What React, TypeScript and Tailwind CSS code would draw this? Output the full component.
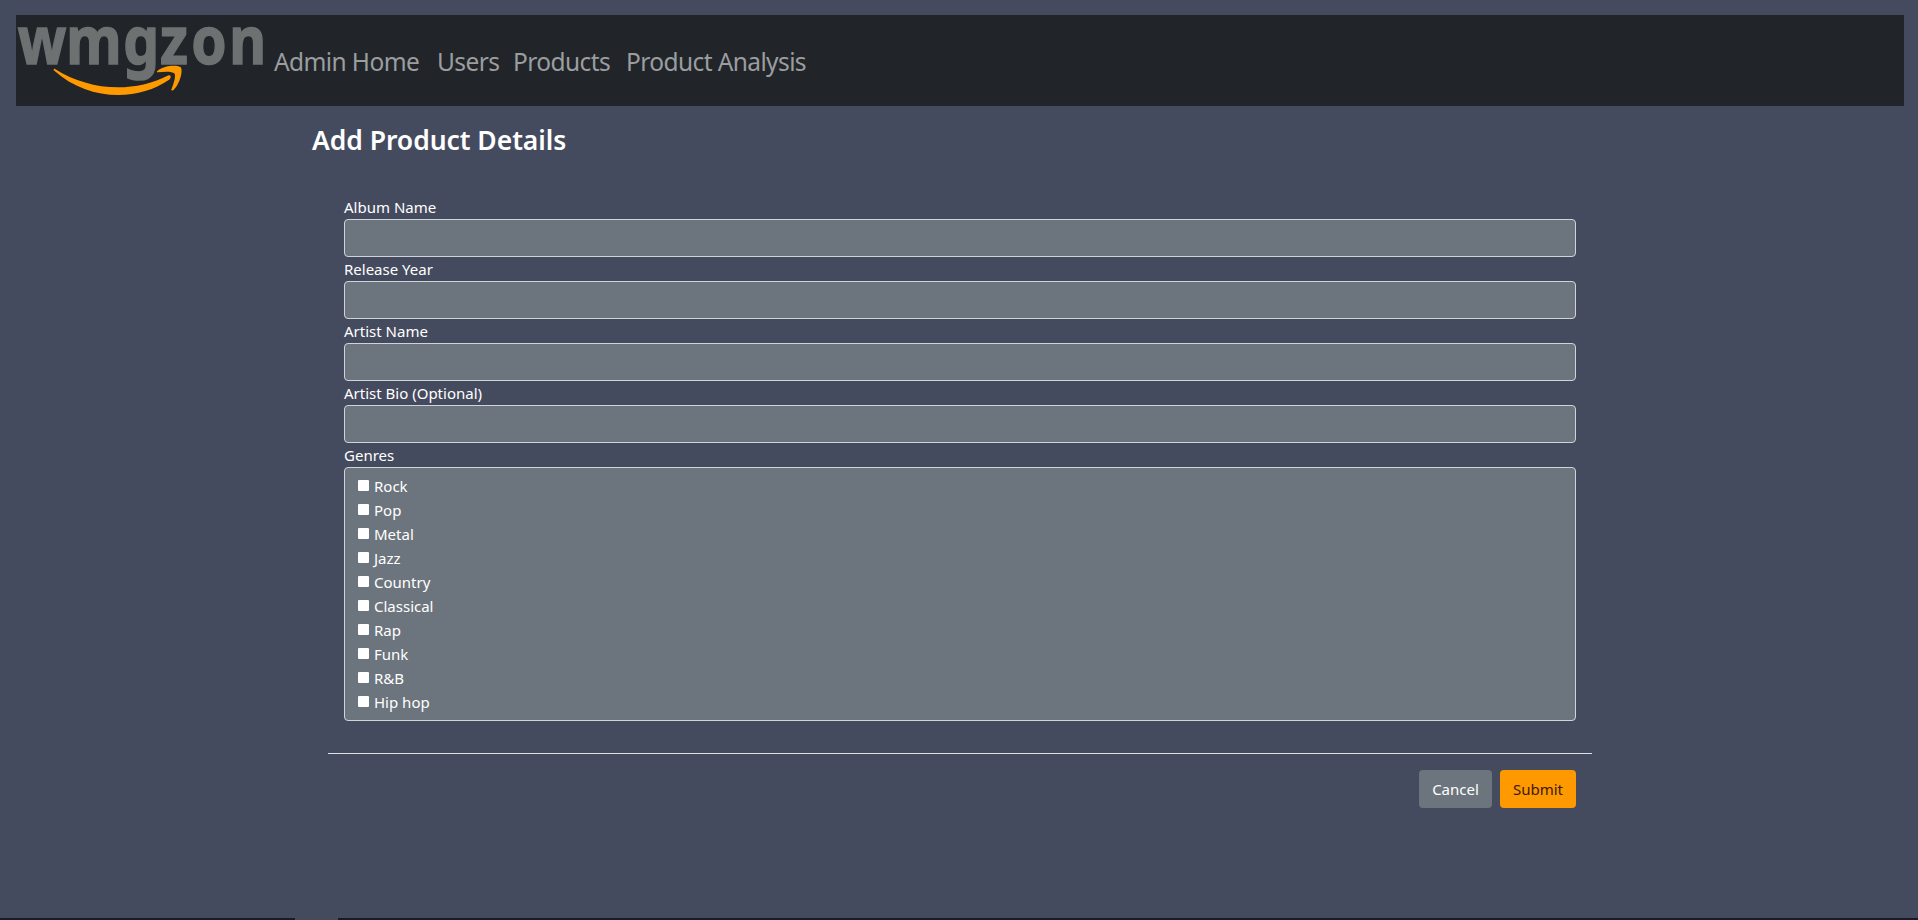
const links = [
  { label: "Admin Home", cls: "w-[147px]" },
  { label: "Users", cls: "w-[60px]" },
  { label: "Products", cls: "w-[97px]" },
  { label: "Product Analysis", cls: "w-[182px]" },
];

const fields = ["Album Name", "Release Year", "Artist Name", "Artist Bio (Optional)"];

const genres = ["Rock", "Pop", "Metal", "Jazz", "Country", "Classical", "Rap", "Funk", "R&B", "Hip hop"];

function Logo() {
  return (
    <svg className="block h-[91px] w-[250px] shrink-0 overflow-visible" viewBox="16 15 250 91">
      <g transform="scale(0.86 1)">
        <text
          x="20.6 77 143.3 186 222.4 266.5"
          y="64.2"
          fontFamily="Noto Sans, sans-serif"
          fontWeight="700"
          fontSize="66"
          fill="#6d7172"
          stroke="#6d7172"
          strokeWidth="1.5"
        >
          wmgzon
        </text>
      </g>
      <g fill="#ff9900">
        <path d="M55 69 C88 90 132 94 168 75.5 C171 74.5 171.500 77.500 169.500 79.500 C137 102 88 101 54 70.500 C53 69.500 54 68.300 55 69Z" />
        <path d="M157 71.500 C162 66 175 64.500 180.500 67 C183.500 70 180 84 173.500 90 C172 91 171 90.500 171.500 89 C174 83 176 76 174.500 73.500 C172 71 164 71.500 158 72.300 C157 72.400 156.500 72 157 71.500Z" />
      </g>
    </svg>
  );
}

export default function App() {
  return (
    <div className="flex h-[920px] flex-col bg-[#454b5e] font-['Noto_Sans',sans-serif] text-[15px] leading-6 text-white">
      <nav className="ml-4 mt-[15px] flex h-[91px] w-[1888px] shrink-0 items-center bg-[#212529]">
        <Logo />
        <div className="ml-2 flex gap-4 pt-[2px] text-[24.5px] leading-9 tracking-[-0.6px] text-[#9b9d9f]">
          {links.map((l) => (
            <a key={l.label} className={"whitespace-nowrap " + l.cls}>
              {l.label}
            </a>
          ))}
        </div>
      </nav>

      <main className="ml-[312px] w-[1296px] flex-1 pt-[17px]">
        <h3 className="h-[34px] text-[26.5px] leading-[34px] font-semibold tracking-[-0.05px]">Add Product Details</h3>
        <form className="px-4 pt-[38px]">
          <div className="px-4">
            {fields.map((f) => (
              <label key={f} className="block">
                <span className="block h-6">{f}</span>
                <input className="block h-[38px] w-full rounded border border-[#ced4da] bg-[#6c757d] px-3" />
              </label>
            ))}
            <div className="h-6">Genres</div>
            <div className="rounded border border-[#ced4da] bg-[#6c757d] px-[13px] py-1.5">
              {genres.map((g) => (
                <label key={g} className="flex h-6 items-center gap-[5px]">
                  <input type="checkbox" className="mb-[1px] size-[11px] appearance-none rounded-[1px] bg-white" />
                  <span>{g}</span>
                </label>
              ))}
            </div>
          </div>
          <div className="mt-8 flex justify-end gap-2 border-t border-[#dee2e6] px-4 pt-4">
            <button type="button" className="h-[38px] w-[73px] rounded bg-[#6c757d]">
              Cancel
            </button>
            <button type="button" className="h-[38px] w-[76px] rounded bg-[#ff9900] text-[#3a1a0c]">
              Submit
            </button>
          </div>
        </form>
      </main>

      <div className="h-[2px] shrink-0 bg-[#1c1b22] pl-[295px]">
        <div className="h-full w-[43px] bg-[#4a4a52]" />
      </div>
    </div>
  );
}
